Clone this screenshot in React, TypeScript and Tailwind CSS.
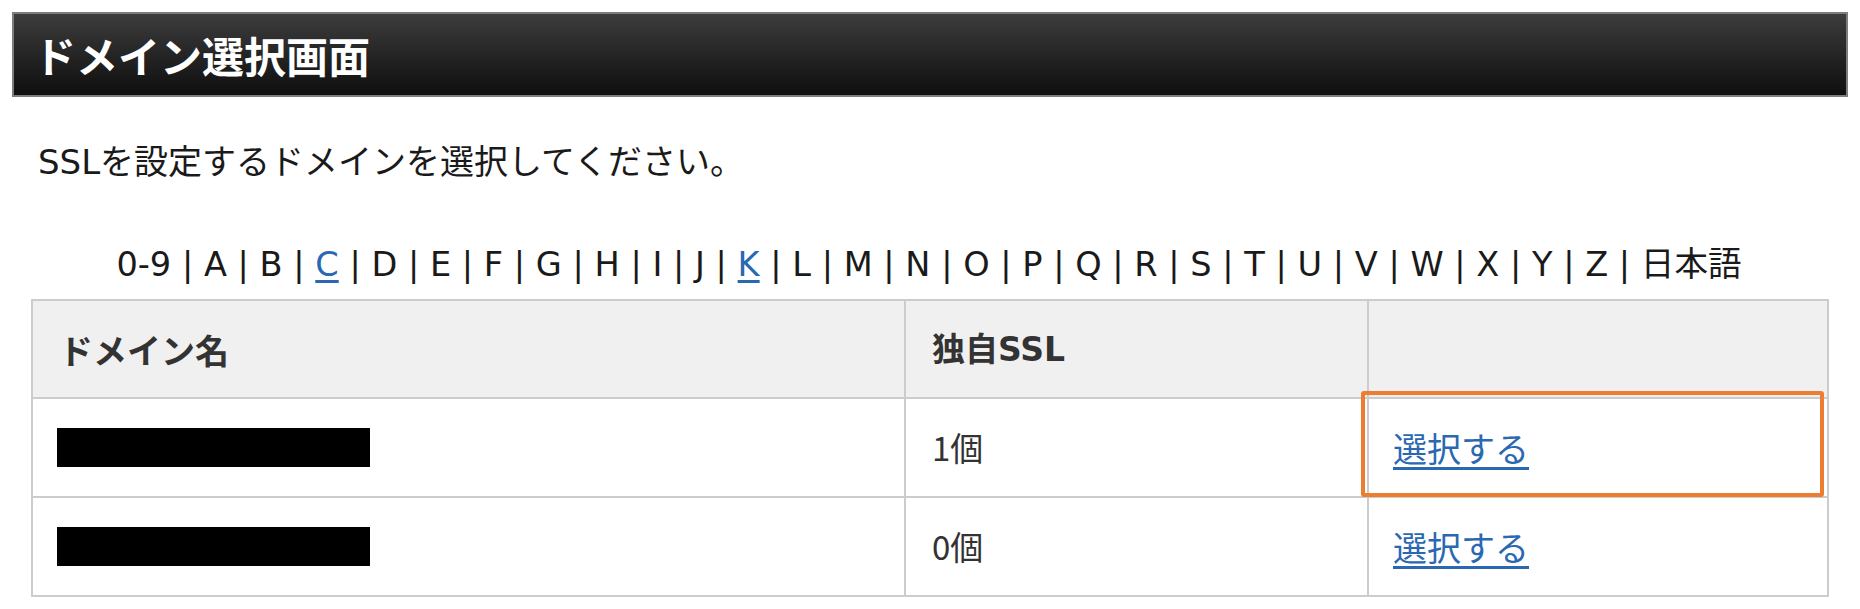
const letters = [
  "0-9", "A", "B", "C", "D", "E", "F", "G", "H", "I", "J", "K", "L", "M",
  "N", "O", "P", "Q", "R", "S", "T", "U", "V", "W", "X", "Y", "Z", "日本語",
];

// letters that have domains get a link
const linked = ["C", "K"];

const rows = [
  { count: "1個", highlight: true },
  { count: "0個", highlight: false },
];

export default function App() {
  return (
    <div className="w-[1860px] h-[609px] bg-white px-[12px] pt-[12px] font-['DejaVu_Sans','Noto_Sans_CJK_JP',sans-serif] text-[#1a1a1a]">
      <div className="h-[85px] flex items-center border-2 border-[#7d7d7d] bg-gradient-to-b from-[#3d3d3d] to-[#0f0f0f] px-[20px]">
        <h1 className="text-[42px] font-bold text-white font-['Noto_Sans_CJK_JP',sans-serif] leading-none">
          ドメイン選択画面
        </h1>
      </div>

      <p className="mt-[41px] ml-[26px] text-[34px] leading-[48px]">
        SSLを設定するドメインを選択してください。
      </p>

      <div className="mt-[52px] ml-[19px] w-[1796px] text-center text-[33.6px] leading-[48px] whitespace-pre">
        {letters.map((l, i) => (
          <span key={l}>
            {i > 0 && " | "}
            {linked.includes(l) ? (
              <a href="#" className="text-[#2a68b1] underline underline-offset-4">
                {l}
              </a>
            ) : (
              <span className={l === "日本語" ? "font-['Noto_Sans_CJK_JP',sans-serif]" : ""}>{l}</span>
            )}
          </span>
        ))}
      </div>

      <table className="mt-[10px] ml-[19px] w-[1796px] table-fixed border-collapse border-2 border-[#cccccc] font-['Noto_Sans_CJK_JP',sans-serif] text-[#333]">
        <colgroup>
          <col className="w-[873px]" />
          <col className="w-[463px]" />
          <col className="w-[460px]" />
        </colgroup>
        <thead>
          <tr className="h-[98px] bg-[#f0f0f0]">
            <th className="border-2 border-[#cccccc] px-[26px] text-left text-[34px] font-bold">ドメイン名</th>
            <th className="border-2 border-[#cccccc] px-[26px] text-left text-[33px] font-bold">
              独自<span className="font-['DejaVu_Sans',sans-serif]">SSL</span>
            </th>
            <th className="border-2 border-[#cccccc]"></th>
          </tr>
        </thead>
        <tbody>
          {rows.map((r, i) => (
            <tr key={i} className="h-[99px]">
              <td className="border-2 border-[#cccccc] px-[24px]">
                <div className="w-[313px] h-[39px] bg-black" />
              </td>
              <td className="border-2 border-[#cccccc] px-[26px] text-[33px]">{r.count}</td>
              <td className="relative border-2 border-[#cccccc] px-[24px] text-[34px]">
                <a href="#" className="text-[#2a68b1] underline underline-offset-[5px]">
                  選択する
                </a>
                {r.highlight && (
                  <div className="absolute -top-[8px] -left-[8px] right-[3px] -bottom-[1px] border-4 border-[#ed7d31] rounded-[3px]" />
                )}
              </td>
            </tr>
          ))}
        </tbody>
      </table>
    </div>
  );
}
